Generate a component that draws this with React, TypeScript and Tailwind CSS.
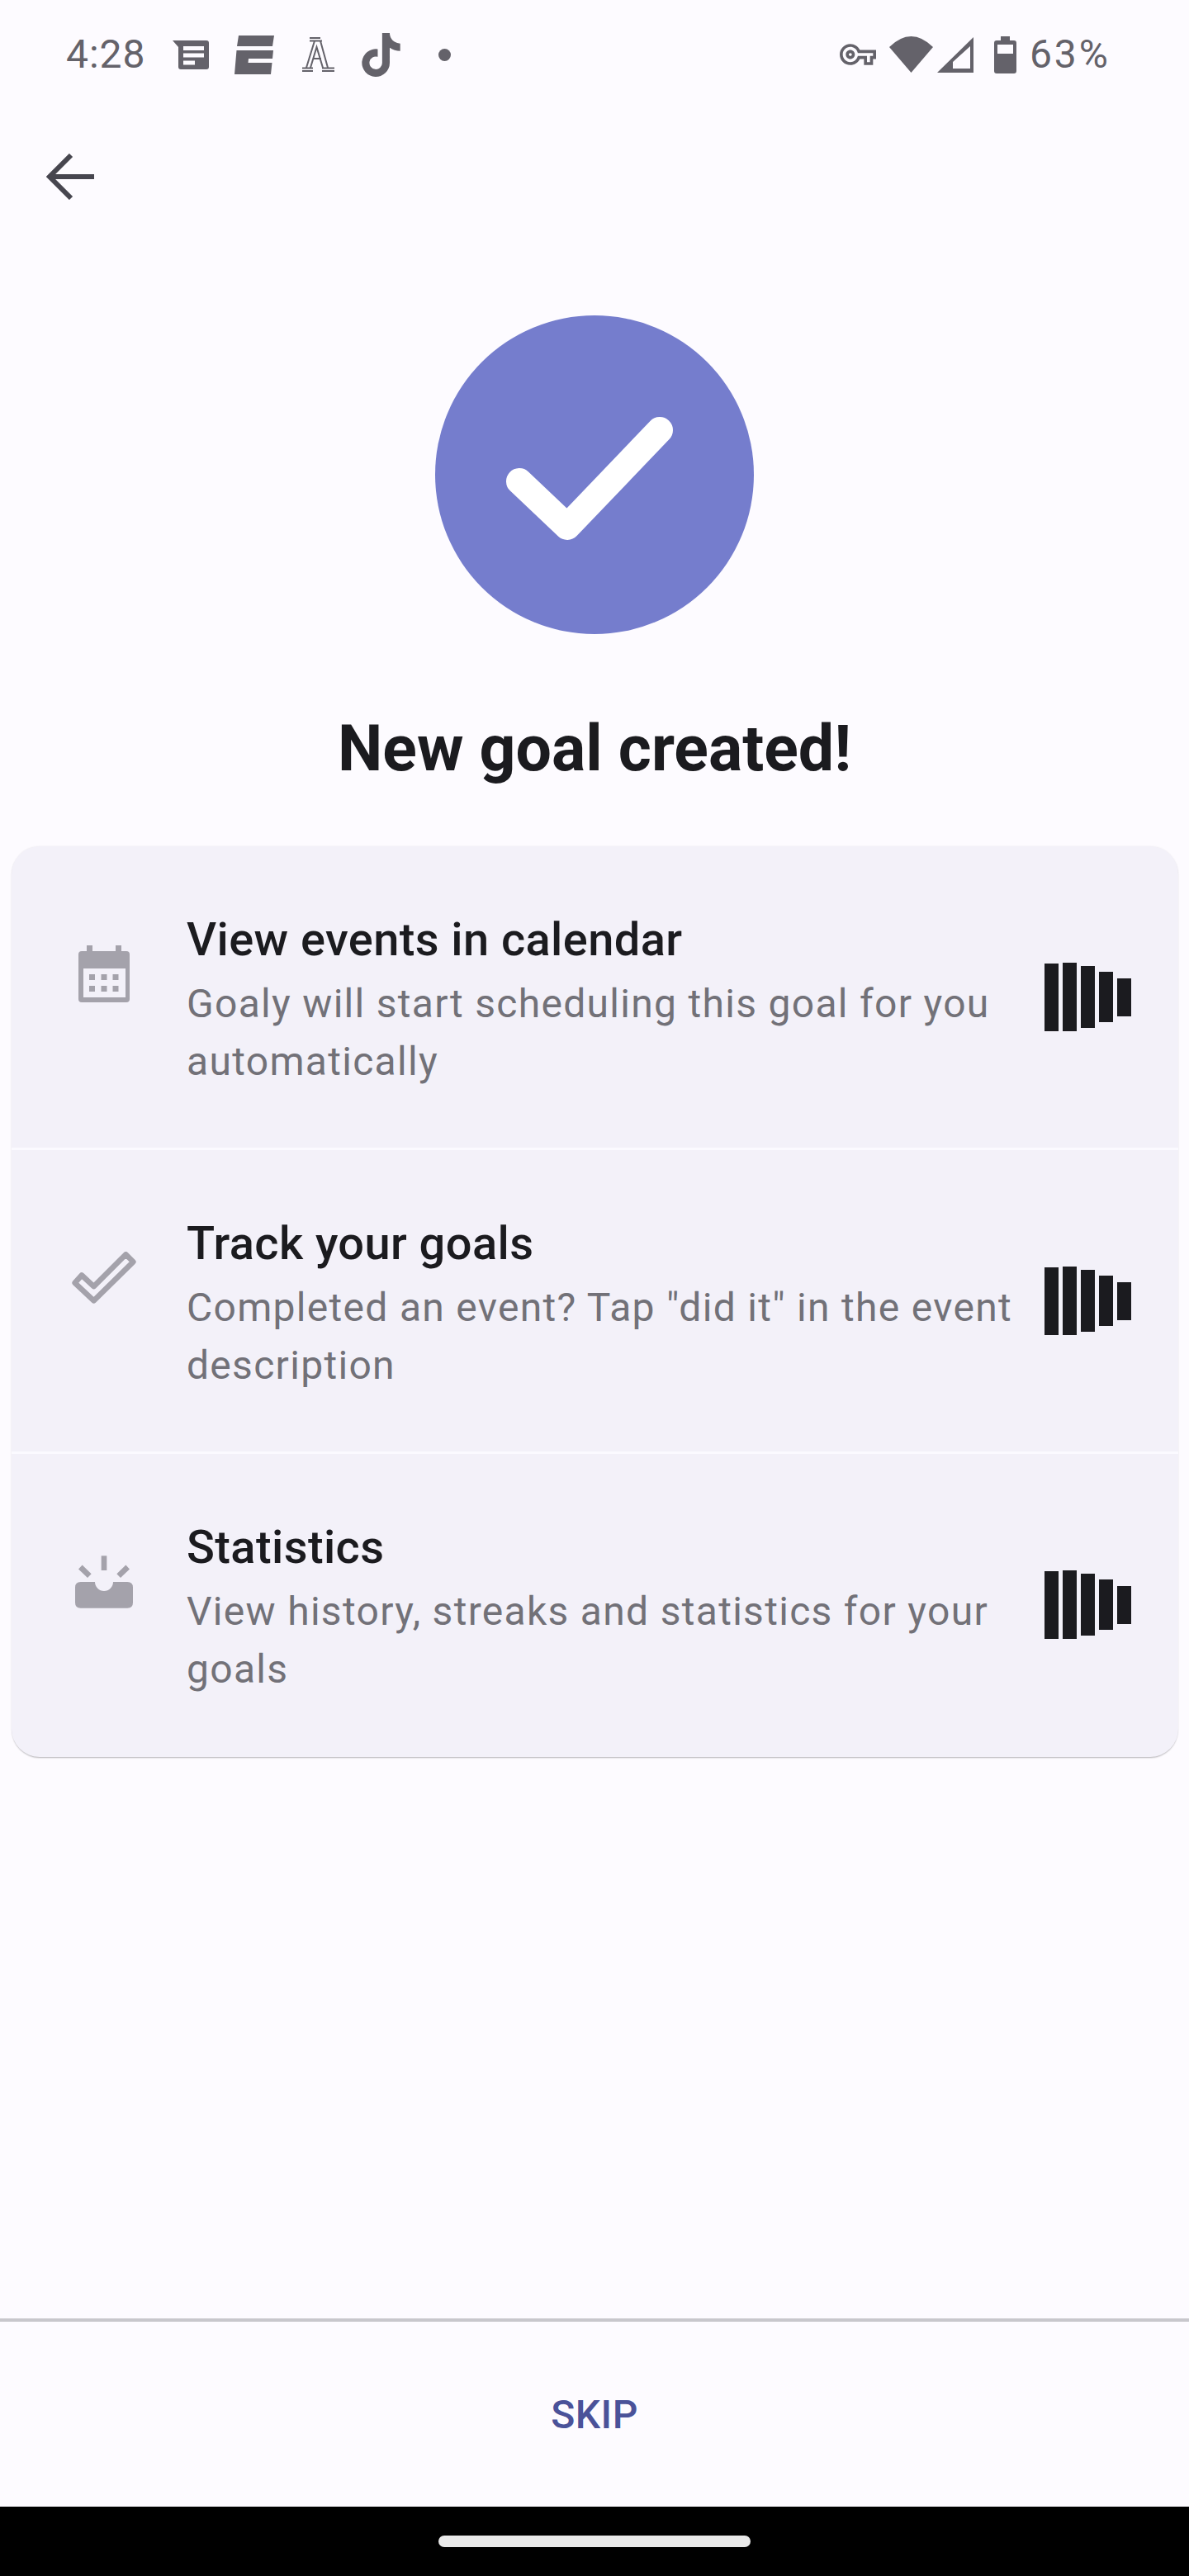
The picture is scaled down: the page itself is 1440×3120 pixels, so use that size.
import React from "react";
import { FaTiktok } from "react-icons/fa";

function Bars() {
  return (
    <div className="flex items-center gap-[5px] mr-[57px] shrink-0">
      <div className="w-[17px] h-[82px] bg-[#1b1b1f]" />
      <div className="w-[17px] h-[83px] bg-[#1b1b1f]" />
      <div className="w-[17px] h-[75px] bg-[#1b1b1f]" />
      <div className="w-[17px] h-[61px] bg-[#1b1b1f]" />
      <div className="w-[17px] h-[46px] bg-[#1b1b1f]" />
    </div>
  );
}

function Row({ icon, title, lines, last }: { icon: React.ReactNode; title: string; lines: string; last?: boolean }) {
  return (
    <div className={`flex items-center ${last ? "h-[367px] pb-[2px]" : "h-[368px] border-b-[3px] border-[#fbfaff]"}`}>
      <div className="flex w-[78px] h-[78px] ml-[73px] mr-[61px] mb-[56px] items-center justify-center shrink-0">{icon}</div>
      <div className="flex-1 min-w-0 pt-[1px]">
        <div className="text-[56px] leading-[86px] font-medium text-[#1b1b1f] tracking-[0.4px]">{title}</div>
        <div className="text-[48px] leading-[70px] text-[#727178] tracking-[1.3px]">{lines}</div>
      </div>
      <Bars />
    </div>
  );
}

export default function App() {
  return (
    <div className="flex flex-col w-[1440px] h-[3120px] bg-[#fdfbff] font-['Roboto',sans-serif] overflow-hidden">
      {/* status bar */}
      <div className="flex items-center justify-between h-[132px] pl-[80px] pr-[95px] text-[#64626a] shrink-0">
        <div className="flex items-center">
          <span className="text-[48px] leading-[56px] tracking-[1px]">4:28</span>
          <svg className="ml-[32px]" width="44" height="35" viewBox="0 0 44 35" fill="#64626a">
            <path fillRule="evenodd" d="M0 0H41Q44 0 44 3V32Q44 35 41 35H10Q7 35 7 32V8ZM13 7V12H38V7ZM13 15.5V20.5H38V15.5ZM13 24.5V29.5H27V24.5Z" />
          </svg>
          <svg className="ml-[31px]" width="48" height="47" viewBox="0 0 48 47" fill="#64626a">
            <path d="M5 0H48L46 13H3ZM2.5 18H47L46 28H17L16.5 33H45.5L44 47H0Z" />
          </svg>
          <svg className="ml-[34px]" width="39" height="42" viewBox="0 0 39 42" fill="none" stroke="#64626a" strokeWidth="2">
            <path d="M9 1H22M9 4.500H24M0 41H13M24 41H39M0 37.500H13M24 37.500H39M5 37L15 4.500M10 37L17.500 12L25 37M31 37L22 4.500M13 26H23" />
          </svg>
          <FaTiktok className="ml-[33px] text-[#64626a]" style={{ width: 47, height: 53 }} />
          <div className="ml-[46px] w-[15px] h-[15px] rounded-full bg-[#64626a]" />
        </div>
        <div className="flex items-center">
          <svg width="44" height="26" viewBox="0 5 24 14" fill="#64626a">
            <path d="M22 19h-6v-4h-2.68c-1.14 2.42-3.6 4-6.32 4-3.86 0-7-3.14-7-7s3.14-7 7-7c2.72 0 5.17 1.58 6.32 4H24v6h-2v4zm-4-2h2v-4h2v-2H11.94l-.23-.67C11.01 8.34 9.11 7 7 7c-2.76 0-5 2.24-5 5s2.24 5 5 5c2.11 0 4.01-1.34 4.71-3.33l.23-.67H18v4zM7 15c-1.65 0-3-1.35-3-3s1.35-3 3-3 3 1.35 3 3-1.35 3-3 3zm0-4c-.55 0-1 .45-1 1s.45 1 1 1 1-.45 1-1-.45-1-1-1z" />
          </svg>
          <svg className="ml-[16px]" width="53" height="44" viewBox="0 0 53 44" fill="#64626a">
            <path d="M26.500 44L0 13Q26.500 -13 53 13Z" />
          </svg>
          <svg className="ml-[5px]" width="44" height="43" viewBox="0 0 44 43" fill="#64626a">
            <path fillRule="evenodd" d="M44 0V43H0ZM40 11L19 30V38H40Z" />
          </svg>
          <svg className="ml-[25px]" width="27" height="45" viewBox="0 0 27 45" fill="#64626a">
            <path fillRule="evenodd" d="M8 0H19V5H24Q27 5 27 8V42Q27 45 24 45H3Q0 45 0 42V8Q0 5 3 5H8ZM4 10V21H23V10Z" />
          </svg>
          <span className="ml-[16px] text-[48px] leading-[56px] tracking-[3px]">63%</span>
        </div>
      </div>

      {/* header */}
      <div className="flex items-center h-[164px] pl-[56px] shrink-0">
        <svg width="58" height="56" viewBox="0 0 58 56" fill="none" stroke="#47464f" strokeWidth="6">
          <path d="M58 28H4M30 2L4 28L30 54" />
        </svg>
      </div>

      {/* hero */}
      <div className="flex justify-center mt-[86px] shrink-0">
        <div className="flex items-center justify-center w-[386px] h-[386px] rounded-full bg-[#757dcd]">
          <svg width="386" height="386" viewBox="0 0 386 386" fill="none" stroke="#ffffff" strokeWidth="32" strokeLinecap="round" strokeLinejoin="round">
            <path d="M102 201L160 256L272 139" />
          </svg>
        </div>
      </div>

      <div className="flex items-start justify-center h-[257px] pt-[94px] shrink-0">
        <h1 className="text-[77px] leading-[90px] font-bold text-[#1b1b1f]">New goal created!</h1>
      </div>

      {/* card */}
      <div className="ml-[14px] mr-[13px] rounded-[34px] bg-[#f3f1f9] shadow-[0_2px_2px_-1px_rgba(0,0,0,0.28),0_0_2px_rgba(0,0,0,0.08)] overflow-hidden shrink-0">
        <Row
          title="View events in calendar"
          lines="Goaly will start scheduling this goal for you automatically"
          icon={
            <svg width="62" height="69" viewBox="0 0 62 69">
              <path fill="#a4a2ab" fillRule="evenodd" d="M10 0H17V7H45V0H52V7H58Q62 7 62 11V65Q62 69 58 69H4Q0 69 0 65V11Q0 7 4 7H10ZM6 28V63H57V28Z" />
              <path fill="#a4a2ab" d="M13 35H20V42H13ZM27.500 35H34.500V42H27.500ZM41.500 35H48.500V42H41.500ZM13 49H20V56H13ZM27.500 49H34.500V56H27.500ZM41.500 49H48.500V56H41.500Z" />
            </svg>
          }
        />
        <Row
          title="Track your goals"
          lines={'Completed an event? Tap "did it" in the event description'}
          icon={
            <svg width="78" height="63" viewBox="262 108 233 190" fill="none" stroke="#a4a2ab" strokeWidth="20" strokeLinejoin="round">
              <path d="M341 287L272 222L297 194L341 235L458 118L485 145Z" />
            </svg>
          }
        />
        <Row
          last
          title="Statistics"
          lines="View history, streaks and statistics for your goals"
          icon={
            <svg width="70" height="64" viewBox="273 190 210 190" fill="#a4a2ab">
              <path d="M293 285H345A33 33 0 0 0 411 285H463Q483 285 483 305V360Q483 380 463 380H293Q273 380 273 360V305Q273 285 293 285Z" />
              <path d="M368 190H388V243H368Z" />
              <path d="M292 231L325 263" stroke="#a4a2ab" strokeWidth="20" />
              <path d="M464 231L431 263" stroke="#a4a2ab" strokeWidth="20" />
            </svg>
          }
        />
      </div>

      <div className="flex-1" />

      {/* footer */}
      <div className="flex items-center justify-center h-[228px] border-t-4 border-[#c8c7cc] pt-[2px] shrink-0">
        <span className="text-[48px] leading-[56px] font-medium text-[#4a5299] tracking-[0.5px]">SKIP</span>
      </div>
      <div className="flex items-center justify-center h-[84px] bg-black shrink-0">
        <div className="w-[378px] h-[14px] rounded-full bg-[#e9e9e9]" />
      </div>
    </div>
  );
}
